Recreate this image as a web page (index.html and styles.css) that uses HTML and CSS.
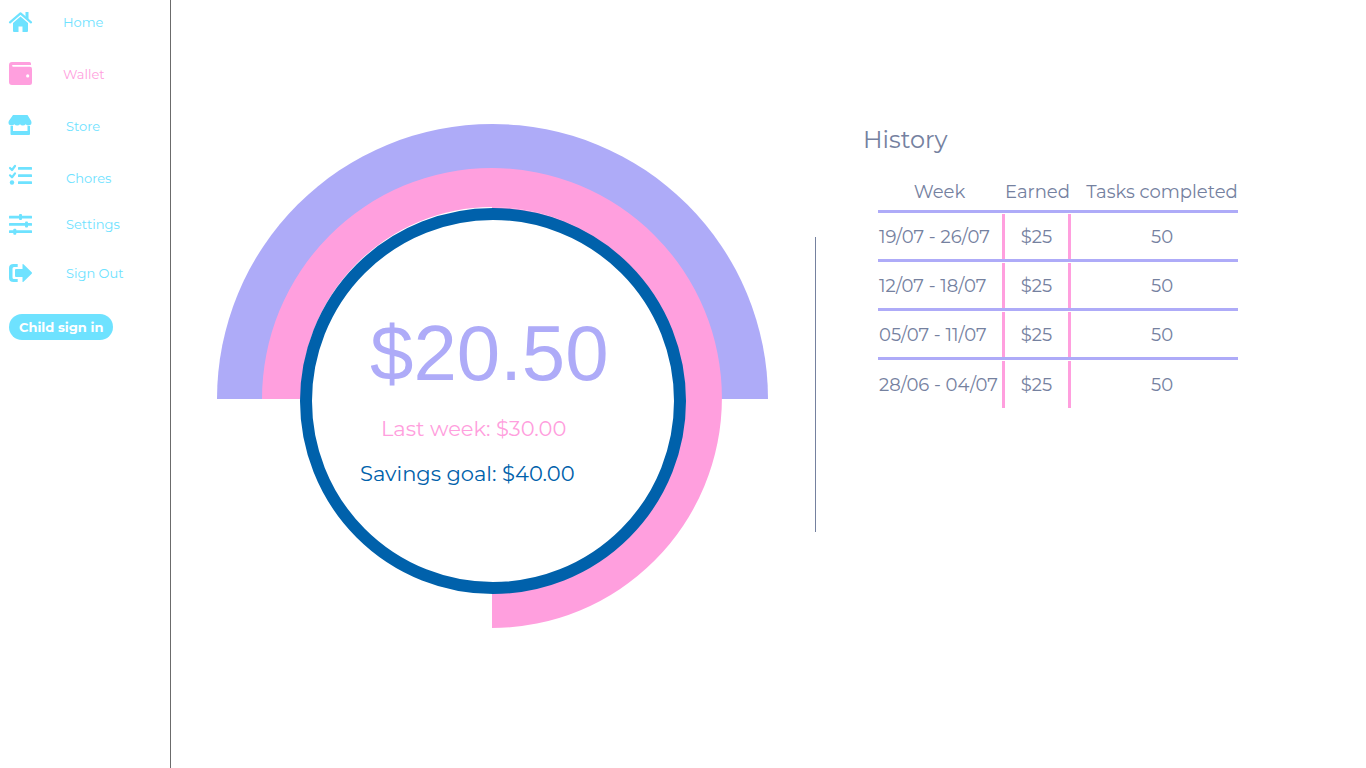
FILE: index.html
```html
<!DOCTYPE html>
<html lang="en">
<head>
<meta charset="utf-8">
<title>Wallet</title>
<link rel="stylesheet" href="styles.css">
</head>
<body>
<nav class="sidebar">
  <ul class="menu">
    <li><a class="item" href="#home">
      <svg class="icon" viewBox="0 0 24 24"><path d="M4 13L11.500 6.500l7.500 6.500V21q0 1-1 1h-4.500v-5.500h-4V22H5q-1 0-1-1z"/><path d="M1 12.300L11.500 3.300l10.500 9" fill="none" stroke="currentColor" stroke-width="2.200" stroke-linecap="round" stroke-linejoin="round"/><path d="M16.500 2H19.500v7.500l-3-2.500z"/></svg>
      <span class="label">Home</span></a></li>
    <li><a class="item active" href="#wallet">
      <svg class="icon" viewBox="0 0 24 24"><path fill-rule="evenodd" d="M3 0h17.500q1.500 0 1.500 1.500V3H4q-1 0-1 .7T4 4.700h17Q23 4.700 23 7v13.500q0 2.500-2.500 2.500H3Q0 23 0 20V3Q0 0 3 0zM18.700 12.300a1.600 1.600 0 1 0 0 3.200 1.600 1.600 0 1 0 0-3.200z"/></svg>
      <span class="label">Wallet</span></a></li>
    <li><a class="item inset" href="#store">
      <svg class="icon" viewBox="0 0 24 24"><path d="M4 1h14.500l3.700 6q1.300 4-2.700 4.500-1.700 0-2.800-1.300-1.200 1.300-2.900 1.300T11 10.200q-1.100 1.300-2.800 1.300t-2.900-1.300q-1.100 1.300-2.800 1.300-4-.5-2.700-4.500z"/><path d="M1.500 12H4V17h14.500v-5H21V20q0 1-1 1H2.500q-1 0-1-1z"/></svg>
      <span class="label">Store</span></a></li>
    <li class="close"><a class="item inset" href="#chores">
      <svg class="icon raised" viewBox="0 0 24 24"><g fill="none" stroke="currentColor" stroke-width="2.200" stroke-linecap="round" stroke-linejoin="round"><path d="M1 5l2 2 3-4M1 12.300l2 2 3-4"/></g><circle cx="3" cy="19.500" r="2.200"/><rect x="9" y="4" width="14" height="2.800" rx=".6"/><rect x="9" y="11.200" width="14" height="2.800" rx=".6"/><rect x="9" y="18.200" width="14" height="2.800" rx=".6"/></svg>
      <span class="label">Chores</span></a></li>
    <li class="near"><a class="item inset" href="#settings">
      <svg class="icon" viewBox="0 0 24 24"><rect y="3.700" width="23" height="2.800" rx=".5"/><rect y="11" width="23" height="2.800" rx=".5"/><rect y="18.300" width="23" height="2.800" rx=".5"/><rect x="10" y="2" width="3" height="6" rx="1"/><rect x="16" y="9.400" width="3" height="6" rx="1"/><rect x="4.300" y="16.700" width="3" height="6" rx="1"/></svg>
      <span class="label">Settings</span></a></li>
    <li class="near"><a class="item inset" href="#signout">
      <svg class="icon" viewBox="0 0 24 24"><path d="M8.700 3v3H5Q3.500 6 3.500 7.500v9Q3.500 18 5 18h3.700v3H4.500Q0 21 0 17V7q0-4 4.500-4z"/><path d="M13.500 3.500Q13.500 2.500 14.500 3.300L22.700 11.300Q23.400 12 22.700 12.700L14.500 20.700Q13.500 21.500 13.500 20.500V16H7q-1 0-1-1V9q0-1 1-1H13.500z"/></svg>
      <span class="label">Sign Out</span></a></li>
  </ul>
  <button class="signin" type="button">Child sign in</button>
</nav>
<main class="page">
  <section class="wallet">
    <svg class="rings" viewBox="0 0 551 504">
      <path d="M0 275a275.500 275 0 0 1 551 0z" fill="#aeabf8"/>
      <path d="M275 275H45a230 231 0 0 1 230-231 230 230 0 0 1 0 460z" fill="#ff9fde"/>
      <path d="M84 275a191 192 0 0 1 382 0z" fill="#fff"/>
      <path d="M275 83a191 192 0 0 1 0 384z" fill="#ff9fde"/>
      <circle cx="276" cy="277" r="187" fill="#fff" stroke="#0061ab" stroke-width="12"/>
    </svg>
    <div class="figures">
      <p class="balance">$20.50</p>
      <p class="last">Last week: $30.00</p>
      <p class="goal">Savings goal: $40.00</p>
    </div>
  </section>
  <div class="divider"></div>
  <section class="history">
    <h1 class="title">History</h1>
    <table class="weeks">
      <thead><tr><th class="week">Week</th><th class="earned">Earned</th><th class="tasks">Tasks completed</th></tr></thead>
      <tbody>
        <tr><td class="week">19/07 - 26/07</td><td class="earned">$25</td><td class="tasks">50</td></tr>
        <tr><td class="week">12/07 - 18/07</td><td class="earned">$25</td><td class="tasks">50</td></tr>
        <tr><td class="week">05/07 - 11/07</td><td class="earned">$25</td><td class="tasks">50</td></tr>
        <tr><td class="week">28/06 - 04/07</td><td class="earned">$25</td><td class="tasks">50</td></tr>
      </tbody>
    </table>
  </section>
</main>
</body>
</html>
```
FILE: styles.css
```css
* { box-sizing: border-box; }
body {
  margin: 0;
  min-height: 100vh;
  display: flex;
  background: #fff;
  color: #75819f;
  font-family: Montserrat, Inter, "Open Sans", sans-serif;
}
.sidebar {
  flex: 0 0 171px;
  padding: 10px 0 0 9px;
  border-right: 1px solid #6b6b6b;
}
.menu { list-style: none; margin: 0; padding: 0; }
.menu li { margin-bottom: 28px; }
.menu .close { margin-bottom: 22px; }
.menu .near { margin-bottom: 25px; }
.item {
  display: flex;
  align-items: center;
  gap: 30px;
  height: 24px;
  color: #6ee2ff;
  font-size: 13px;
  text-decoration: none;
}
.item.active { color: #ff9fde; }
.item.inset { gap: 33px; }
.icon { width: 24px; height: 24px; fill: currentColor; overflow: visible; }
.icon.raised { margin-bottom: 6px; }
.signin {
  display: block;
  margin: 29px 0 0;
  padding: 0 10px;
  height: 26px;
  border: 0;
  border-radius: 13px;
  background: #6ee2ff;
  color: #fff;
  font: 700 13px/26px Montserrat, Inter, "Open Sans", sans-serif;
}
.page {
  flex: 1;
  display: flex;
  align-items: flex-start;
  padding: 124px 46px 0;
}
.wallet { display: grid; flex: 0 1 551px; }
.rings { grid-area: 1 / 1; width: 100%; }
.figures { grid-area: 1 / 1; padding: 184px 0 0 143px; }
.figures p { margin: 0; white-space: nowrap; }
.balance {
  padding-left: 10px;
  color: #aeabf8;
  font: 78px/90px "Liberation Sans", Arial, sans-serif;
}
.last, .goal { font-size: 21px; line-height: 45px; }
.last { padding: 8px 0 0 21px; color: #ff9fde; }
.goal { color: #0061ab; }
.divider {
  width: 1px;
  height: 295px;
  margin: 113px 47px 0;
  background: #75819f;
}
.title { margin: 0; font-size: 24px; line-height: 32px; font-weight: 400; }
.weeks {
  margin: 15px 0 0 15px;
  border-spacing: 0;
  font-size: 18px;
  text-align: center;
  white-space: nowrap;
}
.weeks th, .weeks td { border-bottom: 3px solid #aeabf8; padding: 2px 0 0; }
.weeks th { height: 42px; font-weight: 400; }
.weeks td { height: 49px; }
.weeks tbody tr:last-child td { height: 48px; border-bottom: 0; }
.weeks .week { width: 127px; padding-right: 4px; }
.weeks .earned { width: 66px; padding-right: 1px; }
.weeks td.earned { padding-right: 3px; }
.weeks .tasks { width: 167px; padding-left: 15px; }
.weeks td.week { padding-left: 1px; text-align: left; }
.weeks td.week, .weeks td.earned {
  background: linear-gradient(#ff9fde, #ff9fde) right 1px / 3px 100% no-repeat;
  background-clip: padding-box;
}
```
